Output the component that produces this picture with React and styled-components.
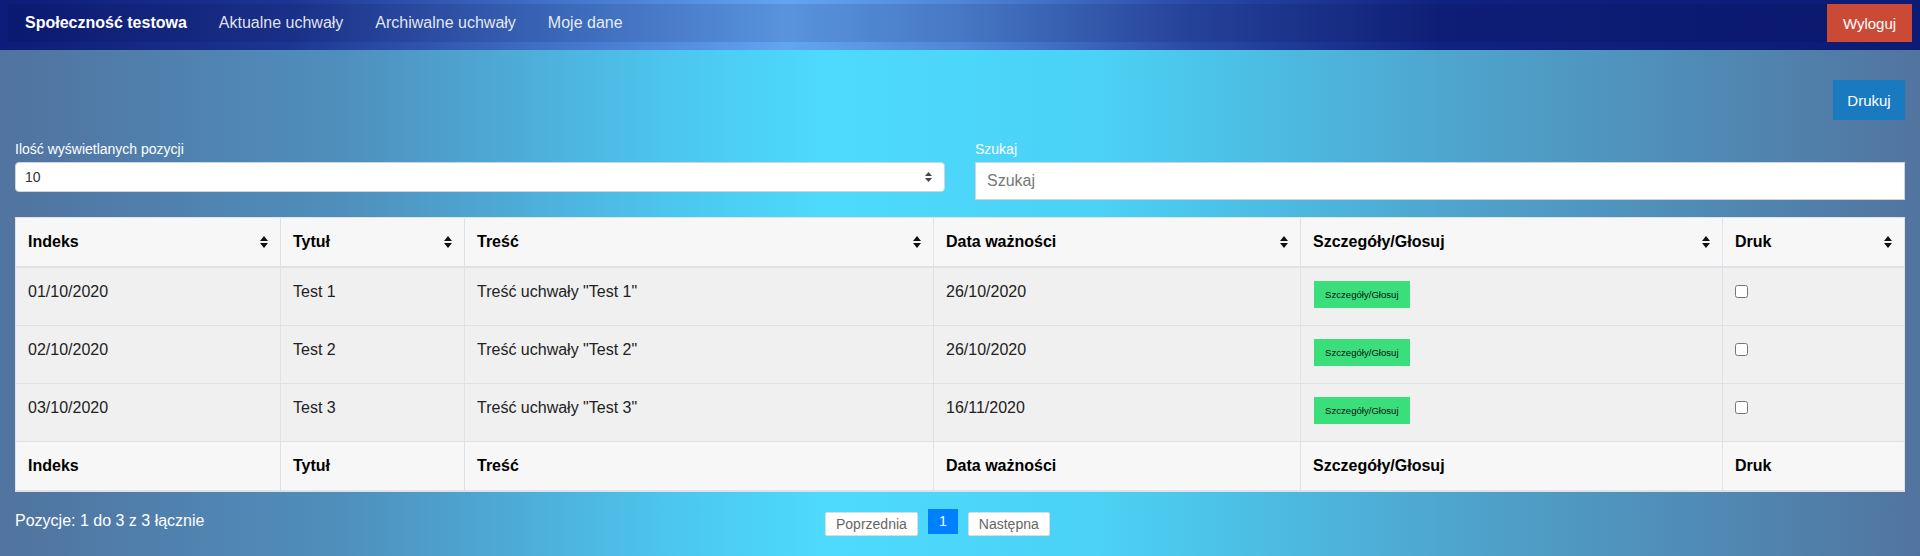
import React from 'react'
import styled, { createGlobalStyle } from 'styled-components'

const GlobalStyle = createGlobalStyle`
  * { box-sizing: border-box; }
  body {
    margin: 0;
    font-family: "Liberation Sans", Arial, sans-serif;
    color: #212529;
  }
`

const Page = styled.div`
  min-height: 100vh;
  background: linear-gradient(90deg, #51739f 0%, #4f8fbd 18%, #4cc6ef 35%, #4ddafd 43%, #4bd2f6 57%, #4ea6cf 75%, #51749f 100%);
`

const Navbar = styled.nav`
  padding: 4px 8px 8px;
  background: linear-gradient(90deg, #0c1c78 0%, #1d3592 15%, #4577cc 30%, #63a5f1 41%, #4f86d6 50%, #2a4aa6 62%, #10227f 75%, #0b1b76 100%);
`

const NavInner = styled.div`
  display: flex;
  align-items: center;
  height: 38px;
  background: rgba(0, 0, 40, 0.1);
`

const Brand = styled.a`
  padding-left: 17px;
  margin-right: 32px;
  font-size: 16px;
  font-weight: bold;
  color: #fff;
`

const NavLink = styled.a`
  margin-right: 32px;
  font-size: 16px;
  color: rgba(255, 255, 255, 0.88);
`

const Logout = styled.button`
  margin-left: auto;
  width: 85px;
  height: 38px;
  border: 0;
  background: #cb4a36;
  color: #fff;
  font-family: inherit;
  font-size: 15px;
`

const Content = styled.main`
  padding: 30px 15px 0;
`

const Toolbar = styled.div`
  display: flex;
  justify-content: flex-end;
`

const PrintButton = styled.button`
  width: 72px;
  height: 40px;
  border: 0;
  background: #1a7abf;
  color: #fff;
  font-family: inherit;
  font-size: 15px;
`

const Filters = styled.div`
  display: grid;
  grid-template-columns: 1fr 1fr;
  column-gap: 30px;
  align-items: start;
  margin-top: 21px;
`

const Field = styled.label`
  display: block;
`

const FieldLabel = styled.span`
  display: block;
  margin-bottom: 5px;
  font-size: 14px;
  line-height: 16px;
  color: #fff;
`

const SelectWrap = styled.div`
  position: relative;
`

const Select = styled.select`
  display: block;
  width: 100%;
  height: 30px;
  padding: 0 24px 0 9px;
  border: 1px solid #ced4da;
  border-radius: 4px;
  background: #fff;
  color: #333;
  font-family: inherit;
  font-size: 14px;
  appearance: none;
`

const SelectArrows = styled.svg`
  position: absolute;
  right: 13px;
  top: 10px;
  pointer-events: none;
`

const SearchInput = styled.input`
  display: block;
  width: 100%;
  height: 38px;
  padding: 0 11px;
  border: 1px solid #ced4da;
  background: #fff;
  font-family: inherit;
  font-size: 16px;
  &::placeholder { color: #777; }
`

const Table = styled.table`
  width: 100%;
  margin-top: 17px;
  border-collapse: collapse;
  table-layout: fixed;
  font-size: 16px;
  line-height: 24px;
  border: 1px solid #dee2e6;
`

const Col = styled.col`
  width: ${p => p.$w ? `${p.$w}px` : 'auto'};
`

const HeadCell = styled.th`
  padding: 12px;
  text-align: left;
  font-weight: bold;
  color: #000;
  background: #f7f7f7;
  border: 1px solid #dee2e6;
  border-bottom-width: 2px;
`

const HeadInner = styled.div`
  display: flex;
  justify-content: space-between;
  align-items: center;
`

const Row = styled.tr`
  height: 58px;
  background: #f0f0f0;
`

const Cell = styled.td`
  padding: 12px;
  vertical-align: top;
  border: 1px solid #dee2e6;
  color: #222;
`

const VoteButton = styled.button`
  display: inline-block;
  height: 27px;
  padding: 0 11px;
  margin: 1px 0 0 1px;
  border: 0;
  background: #3ade7b;
  color: #111;
  font-family: inherit;
  font-size: 9.6px;
  line-height: 27px;
  vertical-align: top;
`

const Check = styled.input`
  display: block;
  width: 13px;
  height: 13px;
  margin: 5px 0 0 0;
`

const Bottom = styled.div`
  display: flex;
  align-items: flex-start;
  padding-top: 17px;
`

const Info = styled.div`
  flex: 0 0 810px;
  font-size: 16px;
  line-height: 24px;
  color: #fff;
`

const Pager = styled.div`
  display: flex;
  align-items: flex-start;
  gap: 10px;
`

const PageButton = styled.button`
  height: ${p => p.$active ? '25px' : '24px'};
  margin-top: ${p => p.$active ? '0' : '3px'};
  min-width: 30px;
  padding: 0 10px;
  border: ${p => p.$active ? '0' : '1px solid #dcdcdc'};
  border-radius: ${p => p.$active ? '0' : '2px'};
  background: ${p => p.$active ? '#0080ff' : '#fff'};
  color: ${p => p.$active ? '#fff' : '#666'};
  font-family: inherit;
  font-size: 14px;
`

const SortIcon = () => (
  <svg width="8" height="12" viewBox="0 0 8 12">
    <path d="M4 0 L8 5 L0 5 Z M0 7 L8 7 L4 12 Z" fill="#111" />
  </svg>
)

const columns = [
  { title: 'Indeks', w: 265 },
  { title: 'Tytuł', w: 184 },
  { title: 'Treść', w: 469 },
  { title: 'Data ważności', w: 367 },
  { title: 'Szczegóły/Głosuj', w: 422 },
  { title: 'Druk' },
]

const rows = [
  { id: '01/10/2020', title: 'Test 1', body: 'Treść uchwały "Test 1"', date: '26/10/2020' },
  { id: '02/10/2020', title: 'Test 2', body: 'Treść uchwały "Test 2"', date: '26/10/2020' },
  { id: '03/10/2020', title: 'Test 3', body: 'Treść uchwały "Test 3"', date: '16/11/2020' },
]

const App = () => {
  return (
    <Page>
      <GlobalStyle />
      <Navbar>
        <NavInner>
          <Brand>Społeczność testowa</Brand>
          <NavLink>Aktualne uchwały</NavLink>
          <NavLink>Archiwalne uchwały</NavLink>
          <NavLink>Moje dane</NavLink>
          <Logout>Wyloguj</Logout>
        </NavInner>
      </Navbar>
      <Content>
        <Toolbar>
          <PrintButton>Drukuj</PrintButton>
        </Toolbar>
        <Filters>
          <Field>
            <FieldLabel>Ilość wyświetlanych pozycji</FieldLabel>
            <SelectWrap>
              <Select defaultValue="10">
                <option>10</option>
                <option>25</option>
                <option>50</option>
              </Select>
              <SelectArrows width="7" height="10" viewBox="0 0 7 10">
                <path d="M3.5 0 L7 4 L0 4 Z M0 6 L7 6 L3.5 10 Z" fill="#444" />
              </SelectArrows>
            </SelectWrap>
          </Field>
          <Field>
            <FieldLabel>Szukaj</FieldLabel>
            <SearchInput placeholder="Szukaj" />
          </Field>
        </Filters>
        <Table>
          <colgroup>
            {columns.map(c => <Col key={c.title} $w={c.w} />)}
          </colgroup>
          <thead>
            <tr>
              {columns.map(c => (
                <HeadCell key={c.title}>
                  <HeadInner>
                    <span>{c.title}</span>
                    <SortIcon />
                  </HeadInner>
                </HeadCell>
              ))}
            </tr>
          </thead>
          <tbody>
            {rows.map(r => (
              <Row key={r.id}>
                <Cell>{r.id}</Cell>
                <Cell>{r.title}</Cell>
                <Cell>{r.body}</Cell>
                <Cell>{r.date}</Cell>
                <Cell><VoteButton>Szczegóły/Głosuj</VoteButton></Cell>
                <Cell><Check type="checkbox" /></Cell>
              </Row>
            ))}
          </tbody>
          <tfoot>
            <tr>
              {columns.map(c => (
                <HeadCell key={c.title}>{c.title}</HeadCell>
              ))}
            </tr>
          </tfoot>
        </Table>
        <Bottom>
          <Info>Pozycje: 1 do 3 z 3 łącznie</Info>
          <Pager>
            <PageButton>Poprzednia</PageButton>
            <PageButton $active>1</PageButton>
            <PageButton>Następna</PageButton>
          </Pager>
        </Bottom>
      </Content>
    </Page>
  )
}

export default App
